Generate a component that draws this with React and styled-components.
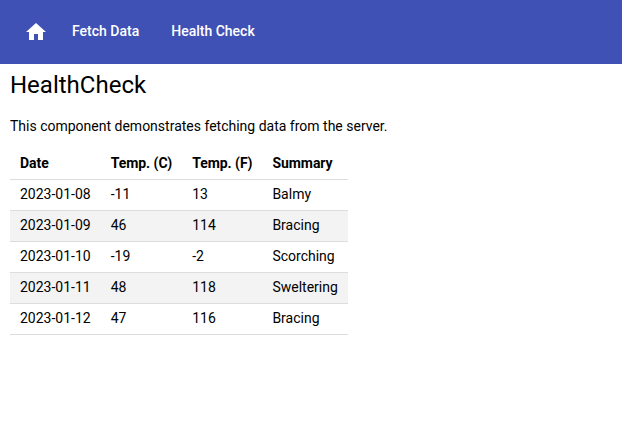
import React from 'react';
import styled, { createGlobalStyle } from 'styled-components';

const GlobalStyle = createGlobalStyle`
  body { margin: 0; background: #fff; color: #000; font: 400 14px/20px Roboto, "Helvetica Neue", sans-serif; }
`;

const Toolbar = styled.header`
  display: flex;
  align-items: center;
  height: 64px;
  box-sizing: border-box;
  padding: 0 16px;
  background: #3f51b5;
  color: #fff;
`;

const HomeButton = styled.button`
  display: flex;
  align-items: center;
  justify-content: center;
  width: 40px;
  height: 40px;
  padding: 0;
  border: 0;
  background: transparent;
  color: inherit;
`;

const HomeIcon = styled.svg`
  width: 24px;
  height: 24px;
  fill: currentColor;
`;

const NavLink = styled.a`
  padding: 0 16px 2px;
  font-weight: 500;
  line-height: 36px;
`;

const Content = styled.main`
  padding: 5px 10px;
`;

const Title = styled.h1`
  margin: 0 0 15px;
  font-size: 24px;
  font-weight: 400;
  line-height: 32px;
`;

const Intro = styled.p`
  margin: 0 0 13px;
  line-height: 20px;
`;

const Table = styled.table`
  border-collapse: collapse;
`;

const HeadCell = styled.th`
  padding: 4px 10px 6px;
  text-align: left;
  font-weight: 700;
  line-height: 20px;
  letter-spacing: -0.05px;
`;

const Row = styled.tr`
  border-bottom: 1px solid #ddd;
  background: ${({ $shaded }) => ($shaded ? '#f3f3f3' : '#fff')};
`;

const Cell = styled.td`
  padding: 4px 10px 6px;
  line-height: 20px;
`;

const forecasts = [
  ['2023-01-08', '-11', '13', 'Balmy'],
  ['2023-01-09', '46', '114', 'Bracing'],
  ['2023-01-10', '-19', '-2', 'Scorching'],
  ['2023-01-11', '48', '118', 'Sweltering'],
  ['2023-01-12', '47', '116', 'Bracing'],
];

export default function App() {
  return (
    <>
      <GlobalStyle />
      <Toolbar>
        <HomeButton aria-label="Home">
          <HomeIcon viewBox="0 0 24 24"><path d="M10 20v-6h4v6h5v-8h3L12 3 2 12h3v8z" /></HomeIcon>
        </HomeButton>
        <NavLink>Fetch Data</NavLink>
        <NavLink>Health Check</NavLink>
      </Toolbar>
      <Content>
        <Title>HealthCheck</Title>
        <Intro>This component demonstrates fetching data from the server.</Intro>
        <Table>
          <thead>
            <Row>
              {['Date', 'Temp. (C)', 'Temp. (F)', 'Summary'].map((h) => <HeadCell key={h}>{h}</HeadCell>)}
            </Row>
          </thead>
          <tbody>
            {forecasts.map((row, i) => (
              <Row key={row[0]} $shaded={i % 2 === 1}>
                {row.map((value, j) => <Cell key={j}>{value}</Cell>)}
              </Row>
            ))}
          </tbody>
        </Table>
      </Content>
    </>
  );
}
